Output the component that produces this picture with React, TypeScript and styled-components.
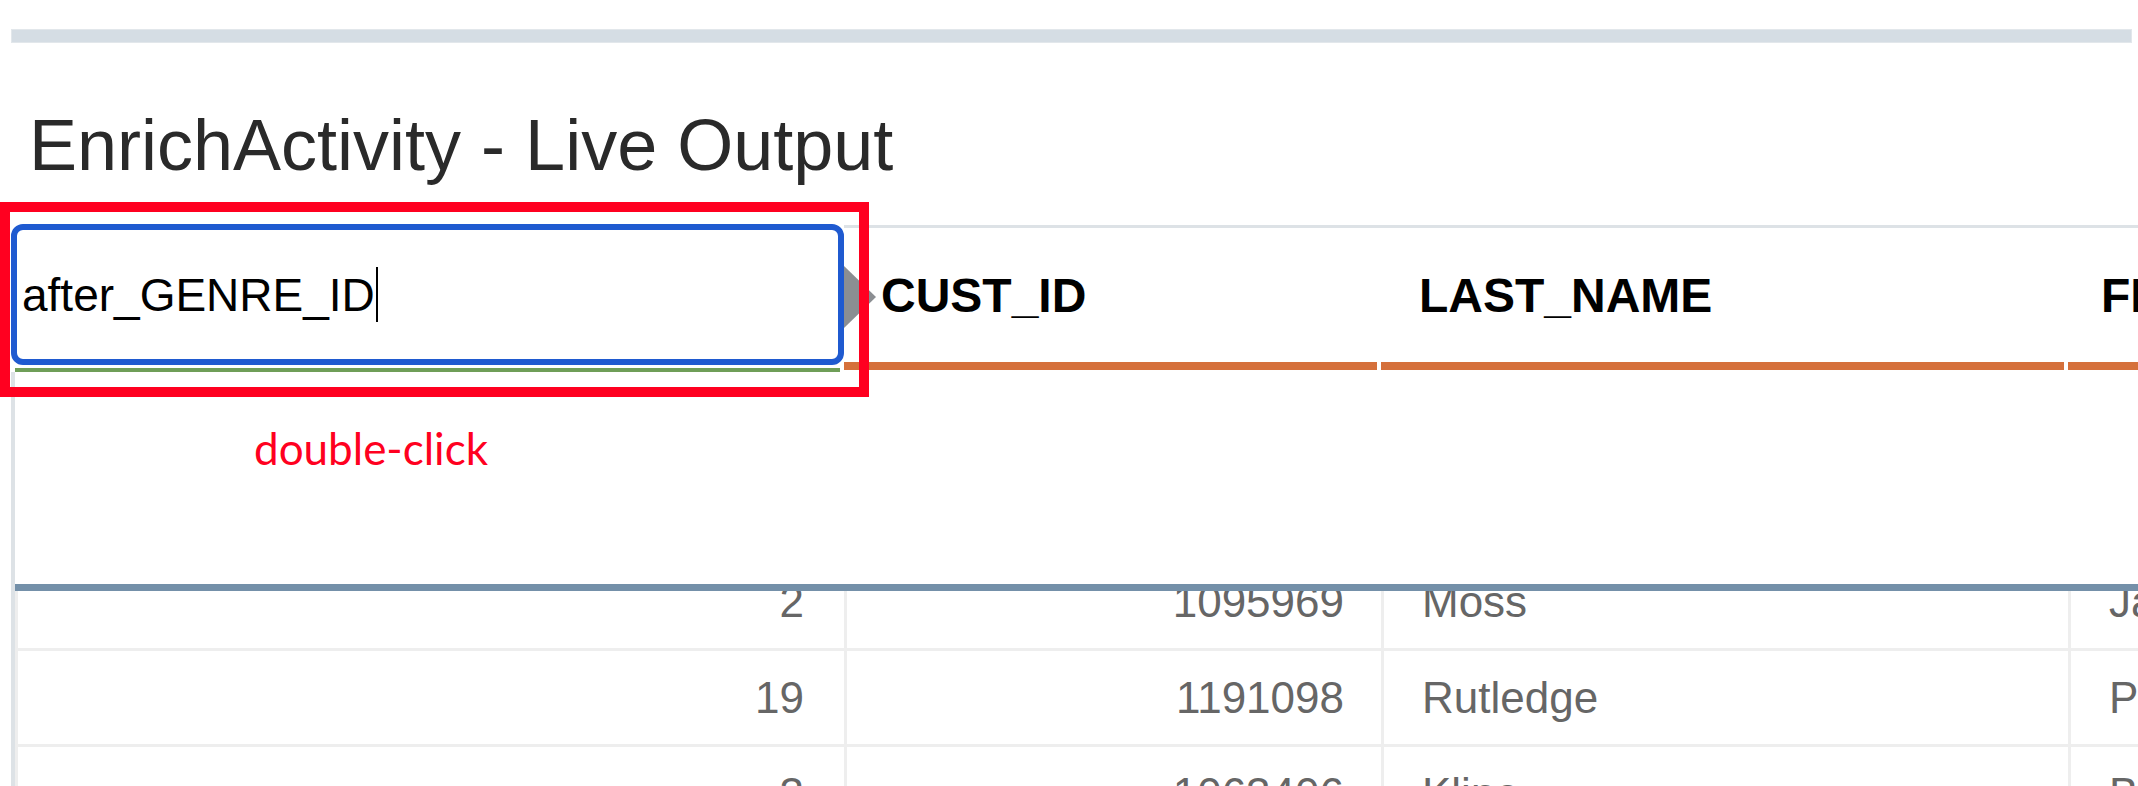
import React from "react";
import styled, { createGlobalStyle } from "styled-components";

const GlobalStyle = createGlobalStyle`
  html, body {
    margin: 0;
    padding: 0;
    background: #ffffff;
    overflow: hidden;
  }
  body {
    font-family: "Liberation Sans", Arial, Helvetica, sans-serif;
  }
`;

const Page = styled.div`
  position: relative;
  width: 2138px;
  height: 786px;
  padding-top: 29px;
  box-sizing: border-box;
  overflow: hidden;
  background: #ffffff;
`;

const TopBar = styled.div`
  height: 14px;
  margin: 0 6px 0 11px;
  background: #d5dde4;
  box-shadow: inset 0 0 0 1px #e2e7eb;
`;

const Title = styled.h1`
  margin: 66px 0 0 29px;
  font-size: 72px;
  line-height: 72px;
  height: 72px;
  font-weight: 400;
  color: #2a2a2a;
  white-space: nowrap;
`;

const Grid = styled.div`
  position: relative;
  margin: 43px 0 0 11px;
  width: 2657px;
`;

const HeaderRow = styled.div`
  position: relative;
  display: grid;
  grid-template-columns: 833px 537px 687px 600px;
  height: 148px;
`;

const InputCell = styled.div`
  display: flex;
  flex-direction: column;
`;

const EditBox = styled.div`
  height: 141px;
  box-sizing: border-box;
  border: 6px solid #1f5ad0;
  border-radius: 12px;
  display: flex;
  align-items: center;
  padding-left: 5px;
  font-size: 46px;
  color: #000000;
  white-space: nowrap;
  background: #ffffff;
`;

const Caret = styled.span`
  display: inline-block;
  width: 2px;
  height: 55px;
  margin-left: 1px;
  background: #000000;
`;

const GreenRule = styled.div`
  height: 4px;
  margin: 3px 4px 0 4px;
  background: #6f9e58;
`;

const HeaderCell = styled.div`
  margin-top: 1px;
  display: flex;
  flex-direction: column;
  border-top: 3px solid #dde2e6;
  height: 142px;
`;

const HeaderLabel = styled.div<{ $pad: number }>`
  flex: 1;
  display: flex;
  align-items: center;
  padding-left: ${(p) => p.$pad}px;
  font-size: 48px;
  font-weight: 700;
  color: #000000;
  white-space: nowrap;
`;

const OrangeBar = styled.div`
  height: 8px;
  margin-right: 4px;
  background: #d5703b;
`;

const ReorderArrow = styled.div`
  position: absolute;
  left: 833px;
  top: 42px;
  width: 0;
  height: 0;
  border-top: 31px solid transparent;
  border-bottom: 31px solid transparent;
  border-left: 32px solid #8b8e92;
`;

const GridBody = styled.div`
  border-left: 4px solid #dde2e6;
`;

const FilterSpace = styled.div`
  height: 212px;
`;

const SlateRule = styled.div`
  height: 7px;
  background: #7490a9;
`;

const Viewport = styled.div`
  height: 195px;
  overflow: hidden;
`;

const RowList = styled.div`
  margin-top: -36px;
`;

const Row = styled.div`
  display: grid;
  grid-template-columns: 829px 537px 687px 600px;
  height: 96px;
  box-sizing: border-box;
  border-bottom: 3px solid #eeeeee;
`;

const Cell = styled.div<{ $align: "left" | "right"; $pad: number }>`
  display: flex;
  align-items: center;
  justify-content: ${(p) => (p.$align === "right" ? "flex-end" : "flex-start")};
  border-left: 3px solid #eeeeee;
  padding-left: ${(p) => (p.$align === "left" ? p.$pad : 0)}px;
  padding-right: ${(p) => (p.$align === "right" ? p.$pad : 0)}px;
  font-size: 44px;
  color: #666666;
  white-space: nowrap;
  overflow: hidden;
`;

const RedFrame = styled.div`
  position: absolute;
  left: 0;
  top: 202px;
  width: 869px;
  height: 195px;
  box-sizing: border-box;
  border: 10px solid #ff0020;
  pointer-events: none;
`;

const Annotation = styled.div`
  position: absolute;
  left: 254px;
  top: 426px;
  font-family: Lato, "Open Sans", sans-serif;
  font-size: 44px;
  line-height: 44px;
  color: #ff0020;
  white-space: nowrap;
`;

const columns = [
  { key: "CUST_ID", align: "right" as const, pad: 37, headPad: 37 },
  { key: "LAST_NAME", align: "left" as const, pad: 38, headPad: 38 },
  { key: "FIRST_NAME", align: "left" as const, pad: 38, headPad: 33 },
];

const rows = [
  ["2", "1095969", "Moss", "Jason"],
  ["19", "1191098", "Rutledge", "Paul"],
  ["3", "1063406", "Kline", "Betty"],
];

export default function App() {
  return (
    <>
      <GlobalStyle />
      <Page>
        <TopBar />
        <Title>EnrichActivity - Live Output</Title>
        <Grid>
          <HeaderRow>
            <InputCell>
              <EditBox>
                after_GENRE_ID
                <Caret />
              </EditBox>
              <GreenRule />
            </InputCell>
            {columns.map((c) => (
              <HeaderCell key={c.key}>
                <HeaderLabel $pad={c.headPad}>{c.key}</HeaderLabel>
                <OrangeBar />
              </HeaderCell>
            ))}
            <ReorderArrow />
          </HeaderRow>
          <GridBody>
            <FilterSpace />
            <SlateRule />
            <Viewport>
              <RowList>
                {rows.map((r, i) => (
                  <Row key={i}>
                    <Cell $align="right" $pad={40}>
                      {r[0]}
                    </Cell>
                    {columns.map((c, j) => (
                      <Cell key={c.key} $align={c.align} $pad={c.pad}>
                        {r[j + 1]}
                      </Cell>
                    ))}
                  </Row>
                ))}
              </RowList>
            </Viewport>
          </GridBody>
        </Grid>
        <RedFrame />
        <Annotation>double-click</Annotation>
      </Page>
    </>
  );
}
